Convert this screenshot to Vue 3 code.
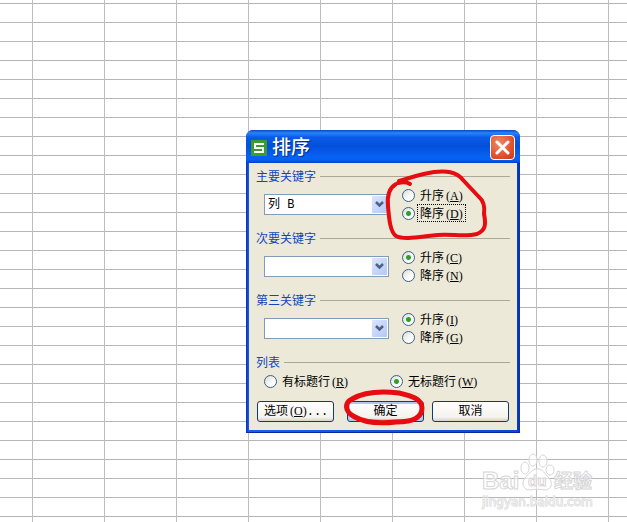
<template>
  <main class="sheet">
    <form class="dialog" role="dialog" aria-labelledby="dialog-title" @submit.prevent>
      <header>
        <svg class="logo" viewBox="0 0 16 16" aria-hidden="true">
          <rect width="16" height="16" rx="1" fill="#3c9c2c" />
          <path d="M13 4H4v4h8v4H3" fill="none" stroke="#fff" stroke-width="2" />
        </svg>
        <h1 id="dialog-title">排序</h1>
        <button type="button" class="close" aria-label="关闭">
          <svg viewBox="0 0 23 23">
            <path d="M6 6l11 11M17 6L6 17" stroke="#fff" stroke-width="3" stroke-linecap="round" />
          </svg>
        </button>
      </header>

      <div class="body">
        <fieldset v-for="(group, i) in groups" :key="group.title">
          <legend>{{ group.title }}</legend>
          <div class="row">
            <div class="combo">
              <select v-model="group.column" :aria-label="group.title">
                <option value=""></option>
                <option value="B">列 B</option>
              </select>
              <svg viewBox="0 0 15 17" aria-hidden="true">
                <path d="M4 6l3.500 3.500L11 6" fill="none" stroke="#4d6185" stroke-width="2.500" />
              </svg>
            </div>
            <div class="orders">
              <label v-for="order in group.orders" :key="order.key">
                <input type="radio" :name="'order' + i" :value="order.key" v-model="group.order" />
                <span class="text" :class="{ focused: order.key === focused }">{{ order.name }}<span class="key">(<u>{{ order.key }}</u>)</span></span>
              </label>
            </div>
          </div>
        </fieldset>

        <fieldset class="list">
          <legend>列表</legend>
          <div class="headings">
            <label v-for="item in headings" :key="item.key">
              <input type="radio" name="heading" :value="item.key" v-model="heading" />
              <span class="text">{{ item.name }}<span class="key">(<u>{{ item.key }}</u>)</span></span>
            </label>
          </div>
        </fieldset>

        <footer>
          <button type="button" class="btn options">选项<span class="key">(<u>O</u>)</span><span class="dots">...</span></button>
          <button type="submit" class="btn primary">确定</button>
          <button type="button" class="btn">取消</button>
        </footer>
      </div>

      <svg class="marks" viewBox="246 130 274 303" aria-hidden="true">
        <path d="M410 184C407 182 402 182 398 183M396 184C389 188 387 196 388 206C389 218 390 232 396 236C404 240 418 237 438 235C452 234 466 237 477 234C486 230 486 224 484 214C485 206 484 201 479 197L463 180C456 171 446 171 434 172C420 174 410 178 399 181" />
        <path class="thick" d="M352 399C364 392 382 391 399 393C412 396 422 399 422 408C422 418 411 422 396 422C379 424 363 422 353 416C345 411 344 403 352 399Z" />
      </svg>
    </form>

    <svg class="watermark" viewBox="0 0 116 54" aria-hidden="true">
      <text x="0" y="35" font-size="24" font-weight="bold">Bai</text>
      <ellipse cx="43" cy="14" rx="4" ry="6" />
      <ellipse cx="51" cy="6" rx="4" ry="6" />
      <ellipse cx="61" cy="7" rx="4" ry="6" />
      <ellipse cx="68" cy="16" rx="4" ry="5" />
      <path d="M55 15C60 14 63 20 67 24C71 28 70 36 63 36C58 35 53 35 48 36C41 36 39 29 43 24C47 20 50 15 55 15Z" />
      <text x="46" y="32" font-size="15" font-weight="bold">du</text>
      <text x="72" y="34" font-size="19" font-weight="bold">经验</text>
      <text class="url" x="0" y="52" font-size="12">jingyan.baidu.com</text>
    </svg>
  </main>
</template>

<script setup>
import { ref } from 'vue'

const focused = 'D'

const groups = ref([
  {
    title: '主要关键字',
    column: 'B',
    order: 'D',
    orders: [{ name: '升序', key: 'A' }, { name: '降序', key: 'D' }],
  },
  {
    title: '次要关键字',
    column: '',
    order: 'C',
    orders: [{ name: '升序', key: 'C' }, { name: '降序', key: 'N' }],
  },
  {
    title: '第三关键字',
    column: '',
    order: 'I',
    orders: [{ name: '升序', key: 'I' }, { name: '降序', key: 'G' }],
  },
])

const headings = [
  { name: '有标题行', key: 'R' },
  { name: '无标题行', key: 'W' },
]
const heading = ref('W')
</script>

<style>
body {
  margin: 0;
}
</style>

<style scoped>
.sheet {
  position: relative;
  min-height: 100vh;
  overflow: hidden;
  background-color: #fff;
  background-image:
    linear-gradient(to right, #bdbdbd 1px, transparent 1px),
    linear-gradient(to bottom, #b6b6b6 1px, transparent 1px);
  background-size: 72px 19px;
  background-position: 32px 3px;
  font-family: 'Liberation Sans', 'Noto Sans CJK SC', sans-serif;
  font-size: 12px;
  line-height: 16px;
  color: #000;
}

.dialog {
  position: absolute;
  left: 246px;
  top: 130px;
  width: 274px;
  box-sizing: border-box;
  padding: 0 3px 2px;
  background: linear-gradient(to right, #0a2ec0, #1560ea 3px, #0a48d0 270px, #0a2ea8);
  border-bottom: 1px solid #0a2a9c;
  border-radius: 7px 7px 0 0;
}

header {
  display: flex;
  align-items: center;
  height: 33px;
  margin: 0 -3px;
  padding: 2px 5px 0;
  box-sizing: border-box;
  border-radius: 7px 7px 0 0;
  background: linear-gradient(#0a48c8, #2a84fa 3px, #0a5ce8 7px, #0450dc 16px, #0662f4 27px, #0560f0 30px, #0342c0);
}

.logo {
  width: 16px;
  height: 16px;
}

h1 {
  flex: 1;
  margin: 0 0 0 5px;
  font-size: 19px;
  line-height: 24px;
  font-weight: 500;
  color: #fff;
  text-shadow: 1px 1px 1px #0a2a80;
}

.close {
  width: 25px;
  height: 25px;
  padding: 0;
  box-sizing: border-box;
  border: 1px solid #fff;
  border-radius: 4px;
  background: radial-gradient(circle at 35% 30%, #ee8a68, #e0532c 60%, #c23c14);
}

.close svg {
  display: block;
  width: 23px;
  height: 23px;
}

.body {
  padding: 5px 7px 8px;
  background: #ece9d8;
}

fieldset {
  min-width: 0;
  margin: 0 0 8px;
  padding: 2px 0 0;
  border: 0;
  border-top: 1px solid #aca899;
}

legend {
  padding: 2px 4px 0 0;
  line-height: 14px;
  color: #1046b8;
}

.row {
  display: flex;
  align-items: center;
  padding-left: 8px;
}

.combo {
  display: grid;
  width: 125px;
  height: 21px;
}

.combo > * {
  grid-area: 1 / 1;
}

select {
  appearance: none;
  width: 100%;
  height: 21px;
  box-sizing: border-box;
  padding: 1px 18px 0 3px;
  border: 1px solid #7f9db9;
  border-radius: 0;
  background: #fff;
  font: 12px/18px 'Liberation Mono', 'Noto Sans CJK SC', monospace;
  color: #000;
}

.combo svg {
  justify-self: end;
  align-self: center;
  width: 15px;
  height: 17px;
  margin-right: 2px;
  border-radius: 1px;
  background: linear-gradient(135deg, #dbe5fd, #b4c8f6);
  pointer-events: none;
}

.orders {
  margin-left: 13px;
}

label {
  display: flex;
  align-items: center;
  gap: 3px;
  height: 18px;
}

.text {
  padding: 2px 2px 0;
  line-height: 14px;
}

input {
  appearance: none;
  flex: none;
  width: 13px;
  height: 13px;
  margin: 0;
  border: 1px solid #3a6088;
  border-radius: 50%;
  background: linear-gradient(135deg, #dcdcd4, #fff 70%);
}

input:checked {
  background: radial-gradient(circle, #2ea02a 2px, transparent 3px), linear-gradient(135deg, #dcdcd4, #fff 70%);
}

.key {
  margin-left: 2px;
  font-family: 'Liberation Serif', serif;
}

.dots {
  font-family: 'Liberation Mono', monospace;
}

.focused {
  outline: 1px dotted #000;
}

.list {
  margin-bottom: 11px;
}

.headings {
  display: flex;
  padding-left: 8px;
}

.headings label {
  width: 126px;
}

.headings label:last-child {
  width: auto;
}

footer {
  display: flex;
  justify-content: flex-end;
  gap: 8px;
  padding-right: 1px;
}

.btn {
  width: 77px;
  height: 21px;
  padding: 0;
  box-sizing: border-box;
  border: 1px solid #0b3c74;
  border-radius: 3px;
  background: linear-gradient(#fff, #f4f3ec 80%, #d8d2c4);
  font: inherit;
  line-height: 19px;
  color: #000;
}

.options {
  margin-right: auto;
  margin-left: 1px;
  padding-left: 6px;
  text-align: left;
}

.primary {
  box-shadow: inset 0 0 0 2px #b4c6ee;
}

.marks {
  position: absolute;
  inset: 0;
  width: 100%;
  pointer-events: none;
}

.marks path {
  fill: none;
  stroke: #e60c10;
  stroke-width: 4;
  stroke-linecap: round;
  stroke-linejoin: round;
}

.marks .thick {
  stroke-width: 5;
}

.watermark {
  position: absolute;
  right: 29px;
  bottom: 14px;
  width: 116px;
  height: 54px;
  fill: #fff;
  fill-opacity: 0.6;
  stroke: #d6d6d6;
  stroke-width: 1;
  overflow: visible;
}

.watermark .url {
  font-family: 'DejaVu Sans', sans-serif;
  paint-order: stroke;
}
</style>
